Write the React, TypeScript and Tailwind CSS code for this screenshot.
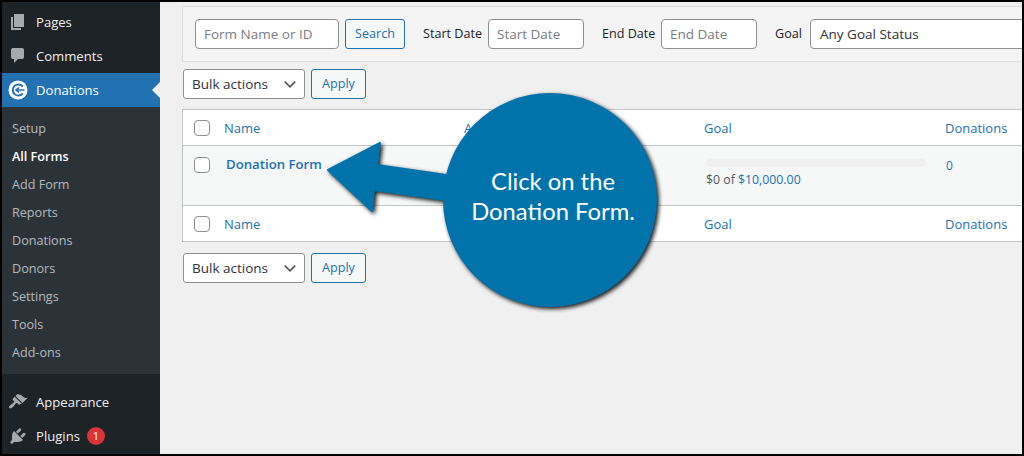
const font = { fontFamily: '"Open Sans", "Noto Sans", sans-serif' };

const submenu = ["Setup", "All Forms", "Add Form", "Reports", "Donations", "Donors", "Settings", "Tools", "Add-ons"];

function Dash({ d }: { d: string }) {
  return (
    <svg viewBox="0 0 20 20" className="w-5 h-5 fill-[#a7aaad]">
      <path d={d} />
    </svg>
  );
}

const pagesIcon = "M6 15V2h10v13H6zm-1 1h8v2H3V5h2v11z";
const commentsIcon = "M5 2h9q.82 0 1.41.59T16 4v7q0 .82-.59 1.41T14 13h-4l-4 4v-4H5q-.82 0-1.41-.59T3 11V4q0-.82.59-1.41T5 2z";
const brushIcon = "M14.48 11.06L7.41 3.99l1.5-1.5c.5-.56 2.3-.47 3.51.32 1.21.8 1.43 1.28 2.91 2.1 1.18.64 2.45 1.26 4.45.85zm-.71.71L6.7 4.7 4.93 6.47c-.39.39-.39 1.02 0 1.41l1.06 1.06c.39.39.39 1.03 0 1.42-.6.6-1.43 1.11-2.21 1.69-.35.26-.7.53-1.01.84C1.43 13.23.4 14.89 1.4 15.9s2.67-.03 4.02-1.37c.31-.31.58-.66.84-1.01.58-.78 1.09-1.61 1.69-2.21.39-.39 1.03-.39 1.42 0l1.06 1.06c.39.39 1.02.39 1.41 0z";
const plugIcon = "M13.11 4.36L9.87 7.6 8 5.73l3.24-3.24c.35-.34 1.05-.2 1.56.32.52.51.66 1.21.31 1.55zm-8 1.77l.91-1.12 9.01 9.01-1.19.84c-.71.71-2.63 1.16-3.82 1.16H6.14L4.9 17.26c-.59.59-1.54.59-2.12 0-.59-.58-.59-1.53 0-2.12l1.24-1.24v-3.88c0-1.13.4-3.19 1.09-3.89zm7.26 3.97l3.24-3.24c.34-.35 1.04-.21 1.55.31.52.51.66 1.21.31 1.55l-3.24 3.25z";

function MenuRow({ icon, label, children }: { icon: React.ReactNode; label: string; children?: React.ReactNode }) {
  return (
    <div className="h-[34px] flex items-center text-[13.1px] text-[#f0f0f1]">
      <div className="w-[34px] pl-[6px] shrink-0">{icon}</div>
      <span className="pt-[1px]">{label}</span>
      {children}
    </div>
  );
}

function Sidebar() {
  return (
    <div className="w-[158px] shrink-0 h-full bg-[#1d2327] pt-[3px] relative">
      <MenuRow icon={<Dash d={pagesIcon} />} label="Pages" />
      <MenuRow icon={<Dash d={commentsIcon} />} label="Comments" />
      <div className="h-[34px] flex items-center text-[13.1px] text-white bg-[#2271b1] relative">
        <div className="w-[34px] pl-[6px] shrink-0">
          <svg viewBox="0 0 20 20" className="w-5 h-5">
            <circle cx="10" cy="10" r="9.5" fill="#fff" />
            <path d="M14.8 6.6A5.6 5.6 0 1 0 14.8 13.4" fill="none" stroke="#2271b1" strokeWidth="2" />
            <path d="M8 10H16.5M11 7.6L8 10L11 12.4" fill="none" stroke="#2271b1" strokeWidth="1.6" />
          </svg>
        </div>
        <span className="pt-[1px]">Donations</span>
        <div className="absolute right-0 top-[9px] w-0 h-0 border-y-[8px] border-y-transparent border-r-[8px] border-r-[#f0f0f1]" />
      </div>
      <div className="bg-[#2c3338] pt-[8px] pb-[7px] text-[12.6px]">
        {submenu.map((item) => (
          <div
            key={item}
            className={`h-[28px] flex items-center pl-[10px] ${item === "All Forms" ? "text-white font-semibold" : "text-[#f0f6fcb3]"}`}
          >
            {item}
          </div>
        ))}
      </div>
      <div className="h-[11px]" />
      <MenuRow icon={<Dash d={brushIcon} />} label="Appearance" />
      <MenuRow icon={<Dash d={plugIcon} />} label="Plugins">
        <span className="ml-[7px] w-[18px] h-[18px] rounded-full bg-[#d63638] text-white text-[11px] flex items-center justify-center">1</span>
      </MenuRow>
    </div>
  );
}

function TextInput({ placeholder, className }: { placeholder: string; className: string }) {
  return (
    <div className={`h-[30px] shrink-0 bg-white border border-[#8c8f94] rounded-[4px] flex items-center pl-[8px] text-[13.5px] text-[#7a7d82] ${className}`}>
      {placeholder}
    </div>
  );
}

function OutlineButton({ label, className }: { label: string; className: string }) {
  return (
    <div className={`h-[30px] shrink-0 bg-[#f6f7f7] border border-[#2271b1] rounded-[3px] flex items-center justify-center text-[12.6px] text-[#2271b1] ${className}`}>
      {label}
    </div>
  );
}

function BulkActions() {
  return (
    <div className="flex gap-[6px] ml-[1px]">
      <div className="w-[122px] h-[30px] bg-white border border-[#8c8f94] rounded-[3px] flex items-center justify-between pl-[8px] pr-[6px] text-[13.5px] text-[#2c3338]">
        Bulk actions
        <svg viewBox="0 0 20 20" className="w-4 h-4 fill-none stroke-[#555] stroke-2">
          <path d="M3.5 7l6.5 6.5L16.5 7" />
        </svg>
      </div>
      <OutlineButton label="Apply" className="w-[55px]" />
    </div>
  );
}

function Checkbox() {
  return <div className="w-[16px] h-[16px] bg-white border border-[#8c8f94] rounded-[4px]" />;
}

function HeaderRow({ border }: { border: string }) {
  return (
    <div className={`h-[36px] grid grid-cols-[41px_240px_240px_241px_200px] items-center text-[13px] text-[#2271b1] ${border}`}>
      <div className="pl-[11px]">
        <Checkbox />
      </div>
      <span className="pt-[2px]">Name</span>
      <span className="pt-[2px]">Author</span>
      <span className="pt-[2px]">Goal</span>
      <span className="pt-[2px]">Donations</span>
    </div>
  );
}

function Main() {
  return (
    <div className="flex-1 min-w-0 h-full bg-[#f0f0f1] pl-[22px] pt-[4px] overflow-hidden">
      <div className="w-[900px] h-[56px] bg-[#f4f4f4] border border-[#dcdcde] flex items-center pl-[12px] text-[13px] text-[#1d2327]">
        <TextInput placeholder="Form Name or ID" className="w-[144px]" />
        <OutlineButton label="Search" className="w-[60px] ml-[6px]" />
        <span className="ml-[18px] w-[65px] shrink-0 pt-[1px] text-[12.6px]">Start Date</span>
        <TextInput placeholder="Start Date" className="w-[96px]" />
        <span className="ml-[18px] w-[59px] shrink-0 pt-[1px] text-[12.6px]">End Date</span>
        <TextInput placeholder="End Date" className="w-[96px]" />
        <span className="ml-[18px] w-[35px] shrink-0 pt-[1px] text-[12.6px]">Goal</span>
        <TextInput placeholder="Any Goal Status" className="w-[300px] pl-[9px] !text-[#2c3338]" />
      </div>
      <div className="mt-[7px]">
        <BulkActions />
      </div>
      <div className="mt-[10px] w-[900px] bg-white border border-[#c3c4c7]">
        <HeaderRow border="border-b border-[#c3c4c7]" />
        <div className="h-[59px] bg-[#f6f7f7] grid grid-cols-[41px_240px_240px_241px_200px] text-[13px] text-[#2271b1]">
          <div className="pl-[11px] pt-[11px]">
            <Checkbox />
          </div>
          <span className="pl-[2px] pt-[9px] text-[13.2px] font-semibold text-[#2271b1]">Donation Form</span>
          <span />
          <div className="pl-[2px] pt-[13px]">
            <div className="w-[220px] h-[8px] rounded-full bg-[#f0f0f1]" />
            <div className="mt-[4px] text-[12.3px] leading-[18px]">
              <span className="text-[#50575e]">$0 of </span>$10,000.00
            </div>
          </div>
          <span className="pl-[1px] pt-[11px] text-[12px]">0</span>
        </div>
        <HeaderRow border="border-t border-[#c3c4c7]" />
      </div>
      <div className="mt-[11px]">
        <BulkActions />
      </div>
    </div>
  );
}

function Callout() {
  return (
    <>
      <svg viewBox="0 0 1024 456" className="absolute inset-0 w-[1024px] h-[456px] pointer-events-none drop-shadow-[2px_2px_2px_rgba(0,0,0,0.9)]">
        <path d="M328 170L380 143L377 165L460 177L460 202L374 190L372 211Z" fill="#0073aa" stroke="#0073aa" strokeWidth="2" strokeLinejoin="round" />
        <circle cx="550" cy="200" r="107" fill="#0073aa" />
      </svg>
      <div className="absolute left-[443px] top-[93px] w-[214px] h-[214px] pl-[6px] pb-[9px] flex flex-col items-center justify-center text-white text-[23.8px] leading-[30px]" style={{ fontFamily: 'Lato, "Open Sans", sans-serif' }}>
        <span>Click on the</span>
        <span>Donation Form.</span>
      </div>
    </>
  );
}

export default function App() {
  return (
    <div className="relative w-[1024px] h-[456px] bg-black p-[2px] overflow-hidden" style={font}>
      <div className="flex w-full h-full overflow-hidden">
        <Sidebar />
        <Main />
      </div>
      <Callout />
    </div>
  );
}
